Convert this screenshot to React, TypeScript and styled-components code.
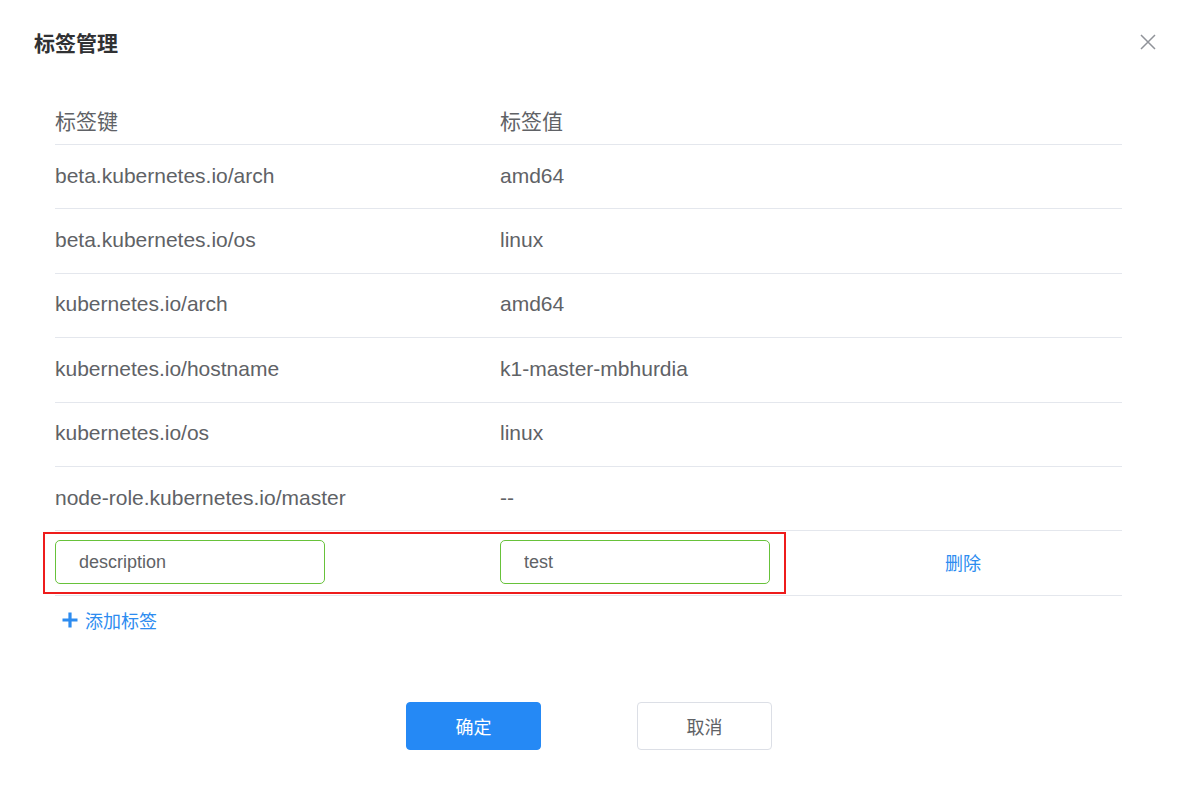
import React from "react";
import styled, { createGlobalStyle } from "styled-components";

interface Label {
  key: string;
  value: string;
}

const Labels: Label[] = [
  { key: "beta.kubernetes.io/arch", value: "amd64" },
  { key: "beta.kubernetes.io/os", value: "linux" },
  { key: "kubernetes.io/arch", value: "amd64" },
  { key: "kubernetes.io/hostname", value: "k1-master-mbhurdia" },
  { key: "kubernetes.io/os", value: "linux" },
  { key: "node-role.kubernetes.io/master", value: "--" },
];

const GlobalStyle = createGlobalStyle`
  html, body {
    margin: 0;
    padding: 0;
    background: #ffffff;
  }
  body {
    font-family: "Liberation Sans", "Noto Sans CJK SC", sans-serif;
    color: #606266;
  }
`;

const App = () => {
  return (
    <>
      <GlobalStyle />
      <Dialog>
        <Header>
          <Title>标签管理</Title>
          <CloseButton aria-label="close">
            <svg width="16" height="16" viewBox="0 0 16 16">
              <path d="M1 1L15 15M15 1L1 15" stroke="#909399" strokeWidth="1.5" fill="none" />
            </svg>
          </CloseButton>
        </Header>

        <Body>
          <HeadRow>
            <HeadCell>标签键</HeadCell>
            <HeadCell>标签值</HeadCell>
            <HeadCell />
          </HeadRow>

          {Labels.map((label) => (
            <Row key={label.key}>
              <Cell>{label.key}</Cell>
              <Cell>{label.value}</Cell>
              <Cell />
            </Row>
          ))}

          <Row>
            <Highlight />
            <Cell>
              <Input defaultValue="description" />
            </Cell>
            <Cell>
              <Input defaultValue="test" />
            </Cell>
            <Cell>
              <LinkButton>删除</LinkButton>
            </Cell>
          </Row>

          <AddRow>
            <AddButton>
              <svg width="16" height="16" viewBox="0 0 16 16">
                <path d="M8 0.5V15.5M0.5 8H15.5" stroke="#2d8cf0" strokeWidth="3.2" fill="none" />
              </svg>
              添加标签
            </AddButton>
          </AddRow>
        </Body>

        <Footer>
          <Button $primary>确定</Button>
          <Button>取消</Button>
        </Footer>
      </Dialog>
    </>
  );
};

const Dialog = styled.div`
  width: 1178px;
  height: 789px;
  background: #ffffff;
  display: flex;
  flex-direction: column;
`;

const Header = styled.div`
  height: 98px;
  box-sizing: border-box;
  padding: 32px 22px 0 34px;
  display: flex;
  justify-content: space-between;
  align-items: flex-start;
`;

const Title = styled.div`
  font-size: 21px;
  line-height: 24px;
  font-weight: bold;
  color: #303133;
`;

const CloseButton = styled.button`
  border: none;
  background: none;
  padding: 0;
  margin-top: 2px;
  width: 16px;
  height: 16px;
  cursor: pointer;
  display: flex;
`;

const Body = styled.div`
  padding: 0 56px 0 55px;
  display: flex;
  flex-direction: column;
`;

const HeadRow = styled.div`
  display: grid;
  grid-template-columns: 445px 445px 1fr;
  height: 47px;
  box-sizing: border-box;
  border-bottom: 1px solid #e4e7ed;
  align-items: center;
`;

const HeadCell = styled.div`
  font-size: 21px;
  color: #606266;
  padding-bottom: 2px;
`;

const Row = styled.div`
  position: relative;
  display: grid;
  grid-template-columns: 445px 445px 1fr;
  height: 64.4px;
  box-sizing: border-box;
  border-bottom: 1px solid #e4e7ed;
  align-items: center;
`;

const Cell = styled.div`
  font-size: 21px;
  color: #606266;
  display: flex;
  align-items: center;
  padding-bottom: 2px;
`;

const Input = styled.input`
  width: 270px;
  height: 44px;
  box-sizing: border-box;
  border: 1px solid #67c23a;
  border-radius: 5px;
  padding: 0 23px;
  font-size: 18px;
  font-family: inherit;
  color: #606266;
  outline: none;
`;

const LinkButton = styled.button`
  border: none;
  background: none;
  padding: 0;
  font-family: inherit;
  font-size: 18px;
  color: #2d8cf0;
  cursor: pointer;
`;

const Highlight = styled.div`
  position: absolute;
  left: -12px;
  top: 1px;
  width: 743px;
  height: 62px;
  box-sizing: border-box;
  border: 2px solid #ee1c1c;
  pointer-events: none;
`;

const AddRow = styled.div`
  height: 48px;
  display: flex;
  align-items: center;
  padding-left: 7px;
`;

const AddButton = styled.button`
  border: none;
  background: none;
  padding: 0;
  display: flex;
  align-items: center;
  gap: 7px;
  font-family: inherit;
  font-size: 18px;
  color: #2d8cf0;
  cursor: pointer;
`;

const Footer = styled.div`
  margin-top: 58px;
  display: flex;
  justify-content: center;
  gap: 96px;
`;

const Button = styled.button<{ $primary?: boolean }>`
  width: 135px;
  height: 48px;
  box-sizing: border-box;
  border-radius: 4px;
  font-family: inherit;
  font-size: 18px;
  cursor: pointer;
  border: 1px solid ${(p) => (p.$primary ? "#2589f5" : "#dcdfe6")};
  background: ${(p) => (p.$primary ? "#2589f5" : "#ffffff")};
  color: ${(p) => (p.$primary ? "#ffffff" : "#606266")};
`;

export default App;
